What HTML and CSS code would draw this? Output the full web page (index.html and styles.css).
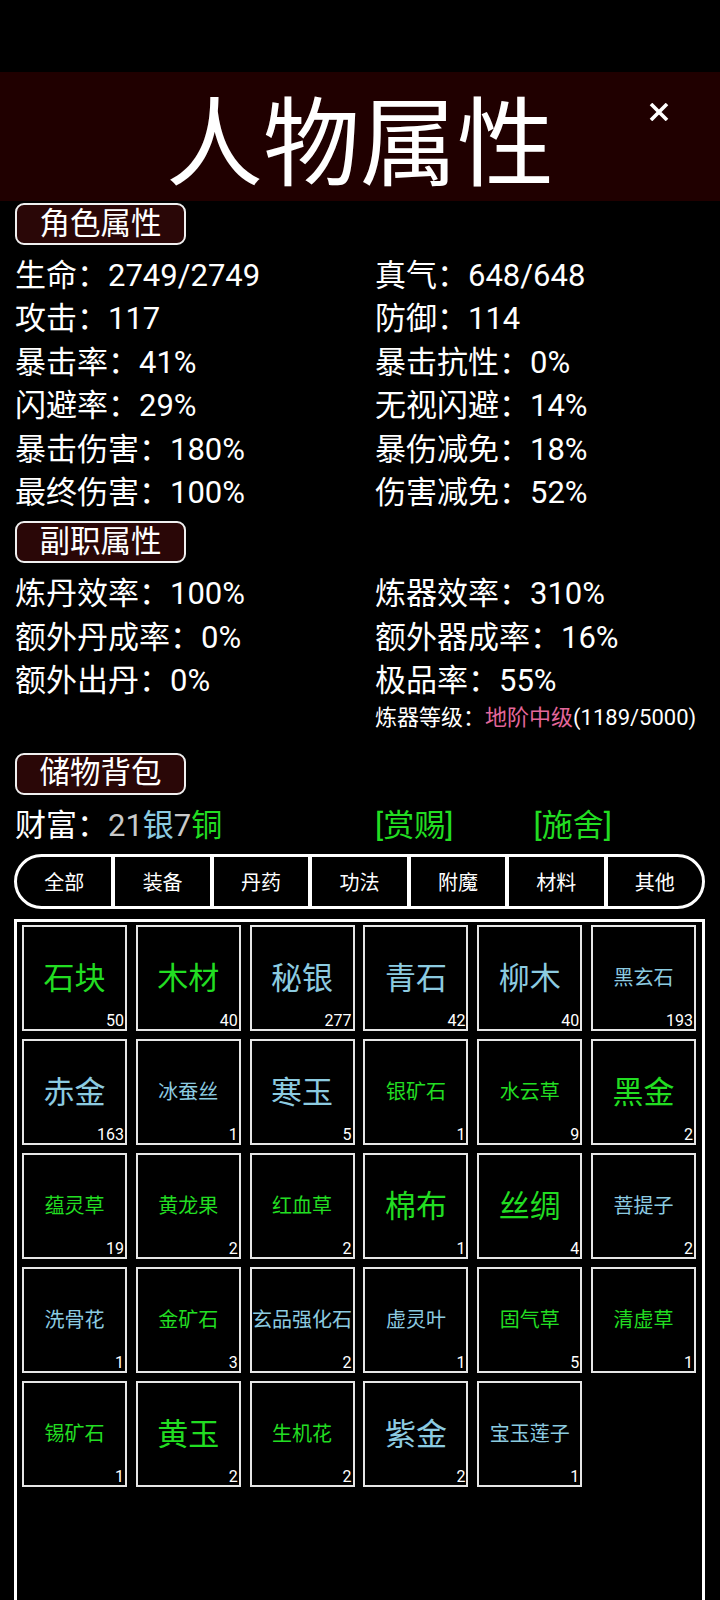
FILE: index.html
```html
<!DOCTYPE html>
<html lang="zh-CN">
<head>
<meta charset="utf-8">
<title>人物属性</title>
<link rel="stylesheet" href="styles.css">
</head>
<body>
<div class="page">
  <div class="topbar"></div>
  <header class="header">
    <h1 class="title">人物属性</h1>
    <svg class="close" width="20" height="18" viewBox="0 0 20 18"><path d="M2 1 L18 17 M18 1 L2 17" stroke="#fff" stroke-width="3.6" fill="none"/></svg>
  </header>

  <div class="label">角色属性</div>
  <div class="stats first">
    <div>生命：2749/2749</div><div>真气：648/648</div>
    <div>攻击：117</div><div>防御：114</div>
    <div>暴击率：41%</div><div>暴击抗性：0%</div>
    <div>闪避率：29%</div><div>无视闪避：14%</div>
    <div>暴击伤害：180%</div><div>暴伤减免：18%</div>
    <div>最终伤害：100%</div><div>伤害减免：52%</div>
  </div>

  <div class="label">副职属性</div>
  <div class="stats">
    <div>炼丹效率：100%</div><div>炼器效率：310%</div>
    <div>额外丹成率：0%</div><div>额外器成率：16%</div>
    <div>额外出丹：0%</div><div>极品率：55%</div>
    <div></div><div class="level">炼器等级：<span class="pink">地阶中级</span>(1189/5000)</div>
  </div>

  <div class="label bag">储物背包</div>
  <div class="stats wealth">
    <div>财富：<span class="grey">21</span><span class="blue">银</span><span class="grey">7</span><span class="green">铜</span></div>
    <div class="actions"><span class="green">[赏赐]</span><span class="green">[施舍]</span></div>
  </div>

  <nav class="tabs">
    <div class="tab">全部</div>
    <div class="tab">装备</div>
    <div class="tab">丹药</div>
    <div class="tab">功法</div>
    <div class="tab">附魔</div>
    <div class="tab">材料</div>
    <div class="tab">其他</div>
  </nav>

  <section class="inventory">
    <div class="cell"><span class="name big green">石块</span><span class="count">50</span></div>
    <div class="cell"><span class="name big green">木材</span><span class="count">40</span></div>
    <div class="cell"><span class="name big blue">秘银</span><span class="count">277</span></div>
    <div class="cell"><span class="name big blue">青石</span><span class="count">42</span></div>
    <div class="cell"><span class="name big blue">柳木</span><span class="count">40</span></div>
    <div class="cell"><span class="name small blue">黑玄石</span><span class="count">193</span></div>

    <div class="cell"><span class="name big blue">赤金</span><span class="count">163</span></div>
    <div class="cell"><span class="name small blue">冰蚕丝</span><span class="count">1</span></div>
    <div class="cell"><span class="name big blue">寒玉</span><span class="count">5</span></div>
    <div class="cell"><span class="name small green">银矿石</span><span class="count">1</span></div>
    <div class="cell"><span class="name small green">水云草</span><span class="count">9</span></div>
    <div class="cell"><span class="name big green">黑金</span><span class="count">2</span></div>

    <div class="cell"><span class="name small green">蕴灵草</span><span class="count">19</span></div>
    <div class="cell"><span class="name small green">黄龙果</span><span class="count">2</span></div>
    <div class="cell"><span class="name small green">红血草</span><span class="count">2</span></div>
    <div class="cell"><span class="name big green">棉布</span><span class="count">1</span></div>
    <div class="cell"><span class="name big green">丝绸</span><span class="count">4</span></div>
    <div class="cell"><span class="name small blue">菩提子</span><span class="count">2</span></div>

    <div class="cell"><span class="name small blue">洗骨花</span><span class="count">1</span></div>
    <div class="cell"><span class="name small green">金矿石</span><span class="count">3</span></div>
    <div class="cell"><span class="name small blue">玄品强化石</span><span class="count">2</span></div>
    <div class="cell"><span class="name small blue">虚灵叶</span><span class="count">1</span></div>
    <div class="cell"><span class="name small green">固气草</span><span class="count">5</span></div>
    <div class="cell"><span class="name small green">清虚草</span><span class="count">1</span></div>

    <div class="cell"><span class="name small green">锡矿石</span><span class="count">1</span></div>
    <div class="cell"><span class="name big green">黄玉</span><span class="count">2</span></div>
    <div class="cell"><span class="name small green">生机花</span><span class="count">2</span></div>
    <div class="cell"><span class="name big blue">紫金</span><span class="count">2</span></div>
    <div class="cell"><span class="name small blue">宝玉莲子</span><span class="count">1</span></div>
  </section>
</div>
</body>
</html>
```

FILE: styles.css
```css
html, body {
  margin: 0;
  padding: 0;
  background: #000;
}
body {
  font-family: Roboto, "Noto Sans CJK SC", sans-serif;
  color: #fff;
  width: 720px;
  height: 1600px;
  overflow: hidden;
}
.page {
  display: flex;
  flex-direction: column;
}
.topbar {
  height: 72px;
  background: #000;
}
.header {
  position: relative;
  height: 129px;
  background: #200000;
  box-sizing: border-box;
  padding-top: 17px;
}
.title {
  margin: 0;
  font-size: 97px;
  font-weight: 400;
  line-height: 112px;
  text-align: center;
  color: #fff;
}
.close {
  position: absolute;
  top: 31px;
  left: 649px;
}
.label {
  align-self: flex-start;
  margin: 2px 0 0 15px;
  width: 171px;
  height: 42px;
  box-sizing: border-box;
  border: 2px solid #f0f0f0;
  border-radius: 9px;
  background: #2a0707;
  display: flex;
  align-items: center;
  justify-content: center;
  font-size: 30.5px;
  line-height: 1;
}
.label + .stats { margin-top: 9px; }
.stats {
  display: grid;
  grid-template-columns: 360px 1fr;
  padding-left: 15px;
  font-size: 31px;
  line-height: 43.4px;
  white-space: nowrap;
}
.stats + .label { margin-top: 7px; }
.level {
  font-size: 22px;
  line-height: 30px;
}
.pink { color: #e3679b; }
.grey { color: #c9c9c9; }
.blue { color: #8ccbe0; }
.green { color: #22dd22; }
.label.bag { margin-top: 20px; }
.actions {
  display: flex;
  gap: 80px;
}
.tabs {
  margin: 7px 15px 0 14px;
  height: 55px;
  box-sizing: border-box;
  border: 3px solid #fff;
  border-radius: 28px;
  overflow: hidden;
  display: flex;
}
.tab {
  flex: 1;
  display: flex;
  align-items: center;
  justify-content: center;
  font-size: 20px;
  color: #fff;
}
.tab + .tab {
  border-left: 4px solid #fff;
}
.inventory {
  margin: 10px 15px 0 14px;
  height: 720px;
  box-sizing: border-box;
  border: 3px solid #fff;
  padding: 3px 0 0 5px;
  display: grid;
  grid-template-columns: repeat(6, 105px);
  grid-auto-rows: 106px;
  column-gap: 8.8px;
  row-gap: 8px;
  align-content: start;
}
.cell {
  position: relative;
  box-sizing: border-box;
  border: 2px solid #e6e6e6;
  display: flex;
  align-items: center;
  justify-content: center;
}
.name {
  white-space: nowrap;
  line-height: 1;
}
.name.big { font-size: 31px; }
.name.small { font-size: 20px; }
.count {
  position: absolute;
  right: 1px;
  bottom: 0;
  font-size: 16px;
  line-height: 16px;
  color: #fff;
}
```
